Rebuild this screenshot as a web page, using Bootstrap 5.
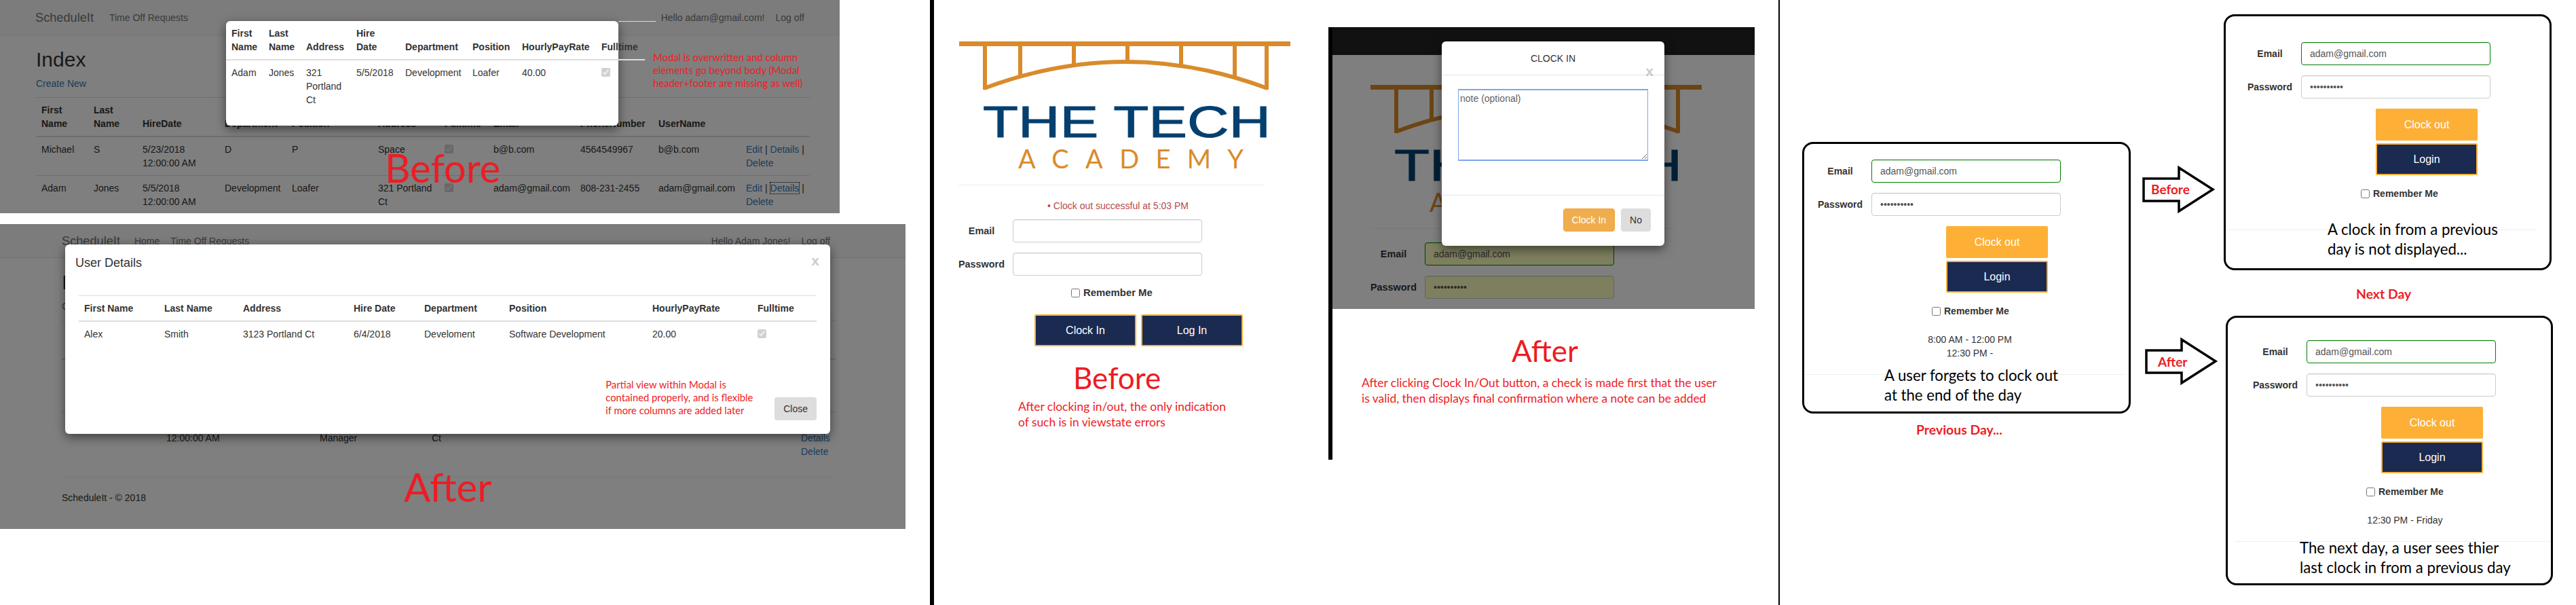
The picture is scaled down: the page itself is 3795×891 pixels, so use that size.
<!DOCTYPE html>
<html lang="en">
<head>
  <meta charset="UTF-8">
  <meta name="viewport" content="width=device-width, initial-scale=1">
  <title>ScheduleIt - Before and After</title>
  <link href="https://cdn.jsdelivr.net/npm/bootstrap@5.3.3/dist/css/bootstrap.min.css" rel="stylesheet">
  <style>
    body { margin: 0; background: #fff; font-family: "Liberation Sans", Arial, sans-serif; font-size: 14px; line-height: 20px; color: #333; }
    .canvas { position: relative; width: 3795px; height: 891px; overflow: hidden; background: #fff; }

    /* items placed on the collage */
    .spot { position: absolute; }
    .shot-before { left: 0; top: 0; width: 1237px; height: 314px; }
    .shot-after { left: 0; top: 330px; width: 1334px; height: 449px; }
    .rule-a { left: 1370px; top: 0; width: 6px; height: 891px; background: #000; }
    .rule-b { left: 1957px; top: 40px; width: 6px; height: 637px; background: #000; }
    .rule-c { left: 2620px; top: 0; width: 2px; height: 891px; background: #000; }
    .login-before { left: 1412px; top: 0; width: 520px; }
    .after-col { left: 1963px; top: 40px; width: 622px; }
    .col-prev { left: 2655px; top: 209px; width: 484px; }
    .col-next { left: 3276px; top: 21px; width: 483px; }
    .col-last { left: 3279px; top: 465px; width: 482px; }
    .arrow-before { left: 3155px; top: 242px; }
    .arrow-after { left: 3159px; top: 495px; }

    /* gray screenshots */
    .shot { overflow: hidden; background: #fff; }
    .dim { position: absolute; inset: 0; background: #000; opacity: .5; z-index: 1; }
    .site-nav { background: #f8f8f8; border-bottom: 1px solid #e7e7e7; padding: 0; height: 52px; }
    .site-nav .navbar-brand { color: #777; font-size: 18.2px; padding: 0; margin: 0 15px 0 0; line-height: 50px; }
    .site-nav .nav-link { color: #777; padding: 0 15px; line-height: 50px; font-size: 14px; }
    .site-nav-b { height: 50px; }
    .site-nav-b .navbar-brand { line-height: 48px; margin-right: 13px; }
    .site-nav-b .nav-link { line-height: 48px; }
    .nav-inner-a { padding: 0 0 0 52px; width: 1193px; }
    .nav-inner-b { padding: 0 0 0 91px; width: 1231px; }
    .page-a { padding: 0 0 0 53px; width: 1193px; }
    .page-b { padding: 0 0 0 91px; width: 1231px; }
    .shot-title { font-size: 30px; line-height: 33px; margin: 18.5px 0 9.5px; font-weight: 500; color: #333; }
    .create-link { display: block; margin-bottom: 10px; color: #337ab7; text-decoration: none; }
    .shot a { color: #337ab7; text-decoration: none; }
    .sheet { table-layout: fixed; border-top: 1px solid #ddd; margin-bottom: 0; font-size: 14px; color: #333; --bs-table-bg: transparent; --bs-table-color: #333; }
    .sheet th, .sheet td { line-height: 20px; padding: 8px !important; border-color: #ddd; }
    .sheet thead th { border-bottom: 2px solid #ddd; }
    .sheet tbody tr:last-child td { border-bottom: 0; }
    .sheet input { margin: 3px 0 0; }
    .link-focus { outline: 1px dotted #000; }
    .shot-footer-line { border: 0; border-top: 1px solid #eee; opacity: 1; margin: 19px 0 20px; }

    /* table column widths */
    .grid-a { width: 1140px; }
    .grid-a th:nth-child(1) { width: 77px; } .grid-a th:nth-child(2) { width: 72px; } .grid-a th:nth-child(3) { width: 121px; }
    .grid-a th:nth-child(4) { width: 99px; } .grid-a th:nth-child(5) { width: 127px; } .grid-a th:nth-child(6) { width: 98px; }
    .grid-a th:nth-child(7) { width: 72px; } .grid-a th:nth-child(8) { width: 128px; } .grid-a th:nth-child(9) { width: 115px; }
    .grid-a th:nth-child(10) { width: 129px; } .grid-a th:nth-child(11) { width: 102px; }
    .grid-b { width: 1140px; }
    .grid-b th:nth-child(1) { width: 74px; } .grid-b th:nth-child(2) { width: 72px; } .grid-b th:nth-child(3) { width: 226px; }
    .grid-b th:nth-child(4) { width: 165px; } .grid-b th:nth-child(5) { width: 122px; } .grid-b th:nth-child(6) { width: 90px; }
    .grid-b th:nth-child(7) { width: 120px; } .grid-b th:nth-child(8) { width: 100px; } .grid-b th:nth-child(9) { width: 112px; }
    .grid-b th:nth-child(10) { width: 59px; }
    .grid-m1 { width: 617px; margin-top: 0; border-top: 0; }
    .grid-m1 th:nth-child(1) { width: 55px; } .grid-m1 th:nth-child(2) { width: 55px; } .grid-m1 th:nth-child(3) { width: 74px; }
    .grid-m1 th:nth-child(4) { width: 72px; } .grid-m1 th:nth-child(5) { width: 99px; } .grid-m1 th:nth-child(6) { width: 73px; }
    .grid-m1 th:nth-child(7) { width: 117px; } .grid-m1 th:nth-child(8) { width: 72px; }
    .grid-m2 { width: 1087px; margin: 0 20px; }
    .grid-m2 th:nth-child(1) { width: 118px; } .grid-m2 th:nth-child(2) { width: 116px; } .grid-m2 th:nth-child(3) { width: 163px; }
    .grid-m2 th:nth-child(4) { width: 104px; } .grid-m2 th:nth-child(5) { width: 125px; } .grid-m2 th:nth-child(6) { width: 211px; }
    .grid-m2 th:nth-child(7) { width: 155px; } .grid-m2 th:nth-child(8) { width: 95px; }

    /* modals inside the screenshots */
    .dlg { position: absolute; background: #fff; border: 0; border-radius: 6px; box-shadow: 0 5px 15px rgba(0,0,0,.5); color: #333; z-index: 2; }
    .dlg-bad { left: 333px; top: 31px; width: 578px; height: 154px; }
    .dlg-bad-top { position: absolute; left: 578px; top: 0; width: 55px; height: 1px; background: #ddd; }
    .dlg-good { left: 96px; top: 30px; width: 1127px; height: 279px; }
    .dlg-good-head { height: 75px; padding: 17px 15px 0; }
    .dlg-good-head h4 { font-size: 18px; line-height: 20px; font-weight: 500; margin: 0; }
    .dlg-good-foot { position: absolute; right: 20px; bottom: 20px; }
    .dlg-x { position: absolute; color: #000; opacity: .2; font-size: 21px; font-weight: 700; line-height: 1; }
    .x-good { right: 16px; top: 13px; }
    .x-clock { right: 16px; top: 33px; }
    .dlg-clock { left: 161px; top: 21px; width: 328px; height: 301px; }
    .clock-head { height: 50px; border-bottom: 1px solid #e5e5e5; text-align: center; line-height: 50px; }
    .clock-body { height: 177px; padding: 20px 24px 0; border-bottom: 1px solid #e5e5e5; }
    .clock-body textarea { height: 106px; border: 1px solid #7ea6e8; border-top-width: 2px; border-bottom-width: 2px; border-radius: 0; padding: 2px; font-size: 14px; box-shadow: none; }
    .clock-foot { padding: 19px 20px 0; gap: 9px; }
    .btn-warm { background: #f0ad4e; color: #fff; border: 1px solid #eea236; font-size: 14px; height: 34px; padding: 0 12px; border-radius: 4px; }
    .btn-plain { background: #ddd; color: #333; border: 0; font-size: 14px; height: 34px; padding: 0 13px; border-radius: 4px; }

    /* annotations */
    .note-red { font-family: Lato, "Liberation Sans", sans-serif; color: #ed1c24; font-size: 14.8px; line-height: 19px; white-space: nowrap; }
    .note-bad { left: 962px; top: 75px; width: 270px; z-index: 3; }
    .note-good { width: 218px; margin: 0 31px 5px 0; }
    .big-red { position: absolute; font-family: Lato, "Liberation Sans", sans-serif; color: #ed1c24; font-size: 58px; line-height: 70px; z-index: 3; }
    .big-before { left: 567px; top: 212px; }
    .big-after { left: 595px; top: 352px; }
    .mid-head { font-family: Lato, "Liberation Sans", sans-serif; color: #ed1c24; font-size: 44px; line-height: 50px; }
    .mid-note { font-family: Lato, "Liberation Sans", sans-serif; color: #ed1c24; font-size: 17.4px; line-height: 23px; white-space: nowrap; }
    .hd-before { margin: 21px 0 0 169px; }
    .nt-before { margin: 5.5px 0 0 88px; }
    .hd-after { margin: 36px 0 0 264px; }
    .nt-after { margin: 10.5px 0 0 43px; }

    /* login form */
    .brand-logo { display: block; }
    .logo-top { margin: 61px 0 0 1px; }
    .logo-dim { margin: 44px 0 0 56px; }
    .logo-rule { border: 0; border-top: 1px solid #eee; opacity: 1; margin: 0; width: 450px; }
    .rule-top { margin-top: 19px; }
    .login-note { color: #b94a4a; margin: 20px 0 10px 131px; white-space: nowrap; }
    .login-row { gap: 12px; margin-bottom: 15px; }
    .login-row label { width: 68px; font-weight: 700; font-size: 14px; text-align: center; color: #333; white-space: nowrap; }
    .login-row .form-control { width: 279px; height: 34px; border: 1px solid #ccc; border-radius: 4px; padding: 6px 12px; font-size: 14px; color: #555; box-shadow: inset 0 1px 1px rgba(0,0,0,.075); }
    .login-row .input-ok { border-color: #008000; }
    .login-row .input-fill { background: #faffbd; }
    .login-big label { font-size: 14.4px; }
    .login-shift { margin-left: 56px; }
    .login-gap { height: 20px; }
    .remember { font-weight: 700; font-size: 14px; color: #333; gap: 5px; white-space: nowrap; }
    .remember input { margin: 0; width: 13px; height: 13px; }
    .remember-mid { margin: 2px 0 0 166px; font-size: 14.9px; }
    .btn-pair { margin: 22px 0 0 112px; gap: 7px; }
    .btn-navy { width: 150px; height: 47px; background: #1b2a50; color: #fff; border: 2px solid #fdb035; border-radius: 2px; font-size: 16px; padding: 0; }
    .btn-gold { width: 150px; height: 47px; background: #fdb035; color: #fff; border: 0; border-radius: 2px; font-size: 16px; padding: 0; }
    .btn-stack { margin: 3px 0 0 190px; gap: 4px; width: 150px; }
    .after-shot { height: 415px; }
    .after-shot .top-bar { height: 41px; background: #222; }

    /* white story cards */
    .story { border: 3px solid #000; border-radius: 16px; background: #fff; }
    .story-a { height: 400px; padding: 23px 0 0 19px; }
    .story-b { height: 377px; padding: 38px 0 0 31px; }
    .story-c { height: 397px; padding: 33px 0 0 36px; }
    .story .logo-rule { width: auto; }
    .story-a .logo-rule { margin: 21px 5px 0 -19px; }
    .story-b .logo-rule { margin: 43px 19px 0 -31px; }
    .story-c .logo-rule { margin: 21px 0 0 -26px; }
    .story-time { text-align: center; color: #333; white-space: nowrap; }
    .story-words { font-family: Lato, "Liberation Sans", sans-serif; color: #000; font-size: 22.2px; line-height: 29px; white-space: nowrap; }
    .remember-a { margin: 17px 0 0 169px; }
    .remember-b { margin: 17px 0 0 168px; }
    .remember-c { margin: 17px 0 0 168px; }
    .time-a { margin: 22px 0 0 163px; width: 124px; }
    .time-c { margin: 22px 0 0 168px; width: 114px; }
    .words-a { margin: -14.5px 0 0 99px; }
    .words-b { margin: -16.5px 0 0 119px; }
    .words-c { margin: -6.5px 0 0 70px; }
    .day-label { font-family: Lato, "Liberation Sans", sans-serif; font-weight: 700; color: #ed1c24; font-size: 19.4px; line-height: 24px; white-space: nowrap; }
    .day-prev { margin: 12px 0 0 168px; }
    .day-next { margin: 23px 0 0 195px; }
    .arrow-tag { position: absolute; font-family: Lato, "Liberation Sans", sans-serif; font-weight: 700; color: #ed1c24; font-size: 19px; line-height: 24px; }
    .tag-before { left: 14px; top: 25px; }
    .tag-after { left: 20px; top: 26px; }
  </style>
</head>
<body>
<div class="canvas">

  <!-- Modal, before -->
  <div class="spot shot shot-before">
    <nav class="navbar navbar-expand site-nav">
      <div class="d-flex justify-content-between nav-inner-a">
        <div class="d-flex">
          <a class="navbar-brand" href="#">ScheduleIt</a>
          <ul class="navbar-nav"><li class="nav-item"><a class="nav-link" href="#">Time Off Requests</a></li></ul>
        </div>
        <ul class="navbar-nav">
          <li class="nav-item"><a class="nav-link" href="#">Hello adam@gmail.com!</a></li>
          <li class="nav-item"><a class="nav-link" href="#">Log off</a></li>
        </ul>
      </div>
    </nav>
    <div class="page-a">
      <h2 class="shot-title">Index</h2>
      <a class="create-link" href="#">Create New</a>
      <table class="table sheet grid-a">
        <thead>
          <tr><th>First Name</th><th>Last Name</th><th>HireDate</th><th>Department</th><th>Position</th><th>Address</th><th>Fulltime</th><th>Email</th><th>PhoneNumber</th><th>UserName</th><th></th></tr>
        </thead>
        <tbody>
          <tr><td>Michael</td><td>S</td><td>5/23/2018 12:00:00 AM</td><td>D</td><td>P</td><td>Space</td><td><input type="checkbox" checked disabled></td><td>b@b.com</td><td>4564549967</td><td>b@b.com</td><td><a href="#">Edit</a> | <a href="#">Details</a> | <a href="#">Delete</a></td></tr>
          <tr><td>Adam</td><td>Jones</td><td>5/5/2018 12:00:00 AM</td><td>Development</td><td>Loafer</td><td>321 Portland Ct</td><td><input type="checkbox" checked disabled></td><td>adam@gmail.com</td><td>808-231-2455</td><td>adam@gmail.com</td><td><a href="#">Edit</a> | <a class="link-focus" href="#">Details</a> | <a href="#">Delete</a></td></tr>
        </tbody>
      </table>
    </div>
    <div class="dim"></div>
    <div class="dlg dlg-bad">
      <div class="dlg-bad-top"></div>
      <table class="table sheet grid-m1">
        <thead><tr><th>First Name</th><th>Last Name</th><th>Address</th><th>Hire Date</th><th>Department</th><th>Position</th><th>HourlyPayRate</th><th>Fulltime</th></tr></thead>
        <tbody><tr><td>Adam</td><td>Jones</td><td>321 Portland Ct</td><td>5/5/2018</td><td>Development</td><td>Loafer</td><td>40.00</td><td><input type="checkbox" checked disabled></td></tr></tbody>
      </table>
    </div>
    <div class="spot note-red note-bad">Modal is overwritten and column<br>elements go beyond body (Modal<br>header+footer are missing as well)</div>
    <div class="big-red big-before">Before</div>
  </div>

  <!-- Modal, after -->
  <div class="spot shot shot-after">
    <nav class="navbar navbar-expand site-nav site-nav-b">
      <div class="d-flex justify-content-between nav-inner-b">
        <div class="d-flex">
          <a class="navbar-brand" href="#">ScheduleIt</a>
          <ul class="navbar-nav">
            <li class="nav-item"><a class="nav-link" href="#">Home</a></li>
            <li class="nav-item"><a class="nav-link" href="#">Time Off Requests</a></li>
          </ul>
        </div>
        <ul class="navbar-nav">
          <li class="nav-item"><a class="nav-link" href="#">Hello Adam Jones!</a></li>
          <li class="nav-item"><a class="nav-link" href="#">Log off</a></li>
        </ul>
      </div>
    </nav>
    <div class="page-b">
      <h2 class="shot-title">Index</h2>
      <a class="create-link" href="#">Create New</a>
      <table class="table sheet grid-b">
        <thead>
          <tr><th>First Name</th><th>Last Name</th><th>HireDate</th><th>Position</th><th>Address</th><th>Fulltime</th><th>Email</th><th>PhoneNumber</th><th>UserName</th><th></th></tr>
        </thead>
        <tbody>
          <tr><td>Alex</td><td>Smith</td><td>6/4/2018<br>12:00:00 AM</td><td>Software Development</td><td>3123 Portland Ct</td><td></td><td></td><td></td><td></td><td><a href="#">Edit |<br>Details<br>Delete</a></td></tr>
          <tr><td>Adam</td><td>Jones</td><td>5/5/2018<br>12:00:00 AM</td><td>Office<br>Manager</td><td>321 Portland<br>Ct</td><td></td><td></td><td></td><td></td><td><a href="#">Edit |<br>Details<br>Delete</a></td></tr>
        </tbody>
      </table>
      <hr class="shot-footer-line">
      <div>ScheduleIt - © 2018</div>
    </div>
    <div class="dim"></div>
    <div class="dlg dlg-good">
      <span class="dlg-x x-good">x</span>
      <div class="dlg-good-head"><h4>User Details</h4></div>
      <table class="table sheet grid-m2">
        <thead><tr><th>First Name</th><th>Last Name</th><th>Address</th><th>Hire Date</th><th>Department</th><th>Position</th><th>HourlyPayRate</th><th>Fulltime</th></tr></thead>
        <tbody><tr><td>Alex</td><td>Smith</td><td>3123 Portland Ct</td><td>6/4/2018</td><td>Develoment</td><td>Software Development</td><td>20.00</td><td><input type="checkbox" checked disabled></td></tr></tbody>
      </table>
      <div class="dlg-good-foot d-flex align-items-end">
        <div class="note-red note-good">Partial view within Modal is<br>contained properly, and is flexible<br>if more columns are added later</div>
        <button class="btn-plain" type="button">Close</button>
      </div>
    </div>
    <div class="big-red big-after">After</div>
  </div>

  <div class="spot rule-a"></div>
  <div class="spot rule-b"></div>
  <div class="spot rule-c"></div>

  <!-- Login, before -->
  <div class="spot login-before">
    <svg class="brand-logo logo-top" width="490" height="192" viewBox="0 0 490 192">
      <g fill="#d98b2b">
        <rect x="0" y="0" width="488" height="7"/>
        <rect x="35" y="7" width="6" height="64"/><rect x="87" y="7" width="6" height="44"/><rect x="166" y="7" width="6" height="27"/>
        <rect x="245" y="7" width="6" height="22"/><rect x="324" y="7" width="6" height="27"/><rect x="403" y="7" width="6" height="44"/><rect x="450" y="7" width="6" height="64"/>
      </g>
      <path d="M37 69 Q245 -9 454 69" fill="none" stroke="#d98b2b" stroke-width="6"/>
      <text x="35" y="141" font-family="Liberation Sans, sans-serif" font-size="65" fill="#04406f" stroke="#04406f" stroke-width="1" textLength="424" lengthAdjust="spacingAndGlyphs">THE TECH</text>
      <text x="87" y="187" font-family="Lato, sans-serif" font-size="38" fill="#d98b2b" textLength="332" lengthAdjust="spacing">ACADEMY</text>
    </svg>
    <hr class="logo-rule rule-top">
    <div class="login-note">• Clock out successful at 5:03 PM</div>
    <div class="d-flex align-items-center login-row login-big"><label>Email</label><input class="form-control" type="text"></div>
    <div class="d-flex align-items-center login-row login-big"><label>Password</label><input class="form-control" type="password"></div>
    <div class="d-flex align-items-center remember remember-mid"><input type="checkbox"><span>Remember Me</span></div>
    <div class="d-flex btn-pair">
      <button class="btn-navy" type="button">Clock In</button>
      <button class="btn-navy" type="button">Log In</button>
    </div>
    <div class="mid-head hd-before">Before</div>
    <div class="mid-note nt-before">After clocking in/out, the only indication<br>of such is in viewstate errors</div>
  </div>

  <!-- Login, after -->
  <div class="spot after-col">
    <div class="shot after-shot position-relative">
      <div class="top-bar"></div>
      <svg class="brand-logo logo-dim" width="490" height="192" viewBox="0 0 490 192">
        <g fill="#d98b2b">
          <rect x="0" y="0" width="488" height="7"/>
          <rect x="35" y="7" width="6" height="64"/><rect x="87" y="7" width="6" height="44"/><rect x="166" y="7" width="6" height="27"/>
          <rect x="245" y="7" width="6" height="22"/><rect x="324" y="7" width="6" height="27"/><rect x="403" y="7" width="6" height="44"/><rect x="450" y="7" width="6" height="64"/>
        </g>
        <path d="M37 69 Q245 -9 454 69" fill="none" stroke="#d98b2b" stroke-width="6"/>
        <text x="35" y="141" font-family="Liberation Sans, sans-serif" font-size="65" fill="#04406f" stroke="#04406f" stroke-width="1" textLength="424" lengthAdjust="spacingAndGlyphs">THE TECH</text>
        <text x="87" y="187" font-family="Lato, sans-serif" font-size="38" fill="#d98b2b" textLength="332" lengthAdjust="spacing">ACADEMY</text>
      </svg>
      <hr class="logo-rule rule-top login-shift">
      <div class="login-gap"></div>
      <div class="d-flex align-items-center login-row login-big login-shift"><label>Email</label><input class="form-control input-ok input-fill" type="text" value="adam@gmail.com"></div>
      <div class="d-flex align-items-center login-row login-big login-shift"><label>Password</label><input class="form-control input-fill" type="password" value="1234567890"></div>
      <div class="dim"></div>
      <div class="dlg dlg-clock">
        <div class="clock-head">CLOCK IN</div>
        <span class="dlg-x x-clock">x</span>
        <div class="clock-body"><textarea class="form-control" placeholder="note (optional)"></textarea></div>
        <div class="d-flex justify-content-end clock-foot">
          <button class="btn-warm" type="button">Clock In</button>
          <button class="btn-plain" type="button">No</button>
        </div>
      </div>
    </div>
    <div class="mid-head hd-after">After</div>
    <div class="mid-note nt-after">After clicking Clock In/Out button, a check is made first that the user<br>is valid, then displays final confirmation where a note can be added</div>
  </div>

  <!-- Previous day -->
  <div class="spot col-prev">
    <div class="story story-a">
      <div class="d-flex align-items-center login-row"><label>Email</label><input class="form-control input-ok" type="text" value="adam@gmail.com"></div>
      <div class="d-flex align-items-center login-row"><label>Password</label><input class="form-control" type="password" value="1234567890"></div>
      <div class="d-flex flex-column btn-stack"><button class="btn-gold" type="button">Clock out</button><button class="btn-navy" type="button">Login</button></div>
      <div class="d-flex align-items-center remember remember-a"><input type="checkbox"><span>Remember Me</span></div>
      <div class="story-time time-a">8:00 AM - 12:00 PM<br>12:30 PM -</div>
      <hr class="logo-rule">
      <div class="story-words words-a">A user forgets to clock out<br>at the end of the day</div>
    </div>
    <div class="day-label day-prev">Previous Day...</div>
  </div>

  <div class="spot arrow-before">
    <svg width="112" height="74" viewBox="0 0 112 74"><polygon points="3,21 55,21 55,5 105,37 55,69 55,54 3,54" fill="#fff" stroke="#000" stroke-width="3.5"/></svg>
    <span class="arrow-tag tag-before">Before</span>
  </div>

  <!-- Next day, before the fix -->
  <div class="spot col-next">
    <div class="story story-b">
      <div class="d-flex align-items-center login-row"><label>Email</label><input class="form-control input-ok" type="text" value="adam@gmail.com"></div>
      <div class="d-flex align-items-center login-row"><label>Password</label><input class="form-control" type="password" value="1234567890"></div>
      <div class="d-flex flex-column btn-stack"><button class="btn-gold" type="button">Clock out</button><button class="btn-navy" type="button">Login</button></div>
      <div class="d-flex align-items-center remember remember-b"><input type="checkbox"><span>Remember Me</span></div>
      <hr class="logo-rule">
      <div class="story-words words-b">A clock in from a previous<br>day is not displayed...</div>
    </div>
    <div class="day-label day-next">Next Day</div>
  </div>

  <div class="spot arrow-after">
    <svg width="112" height="74" viewBox="0 0 112 74"><polygon points="3,21 55,21 55,5 105,37 55,69 55,54 3,54" fill="#fff" stroke="#000" stroke-width="3.5"/></svg>
    <span class="arrow-tag tag-after">After</span>
  </div>

  <!-- Next day, after the fix -->
  <div class="spot col-last">
    <div class="story story-c">
      <div class="d-flex align-items-center login-row"><label>Email</label><input class="form-control input-ok" type="text" value="adam@gmail.com"></div>
      <div class="d-flex align-items-center login-row"><label>Password</label><input class="form-control" type="password" value="1234567890"></div>
      <div class="d-flex flex-column btn-stack"><button class="btn-gold" type="button">Clock out</button><button class="btn-navy" type="button">Login</button></div>
      <div class="d-flex align-items-center remember remember-c"><input type="checkbox"><span>Remember Me</span></div>
      <div class="story-time time-c">12:30 PM - Friday</div>
      <hr class="logo-rule">
      <div class="story-words words-c">The next day, a user sees thier<br>last clock in from a previous day</div>
    </div>
  </div>

</div>
<script src="https://cdn.jsdelivr.net/npm/bootstrap@5.3.3/dist/js/bootstrap.bundle.min.js"></script>
</body>
</html>
